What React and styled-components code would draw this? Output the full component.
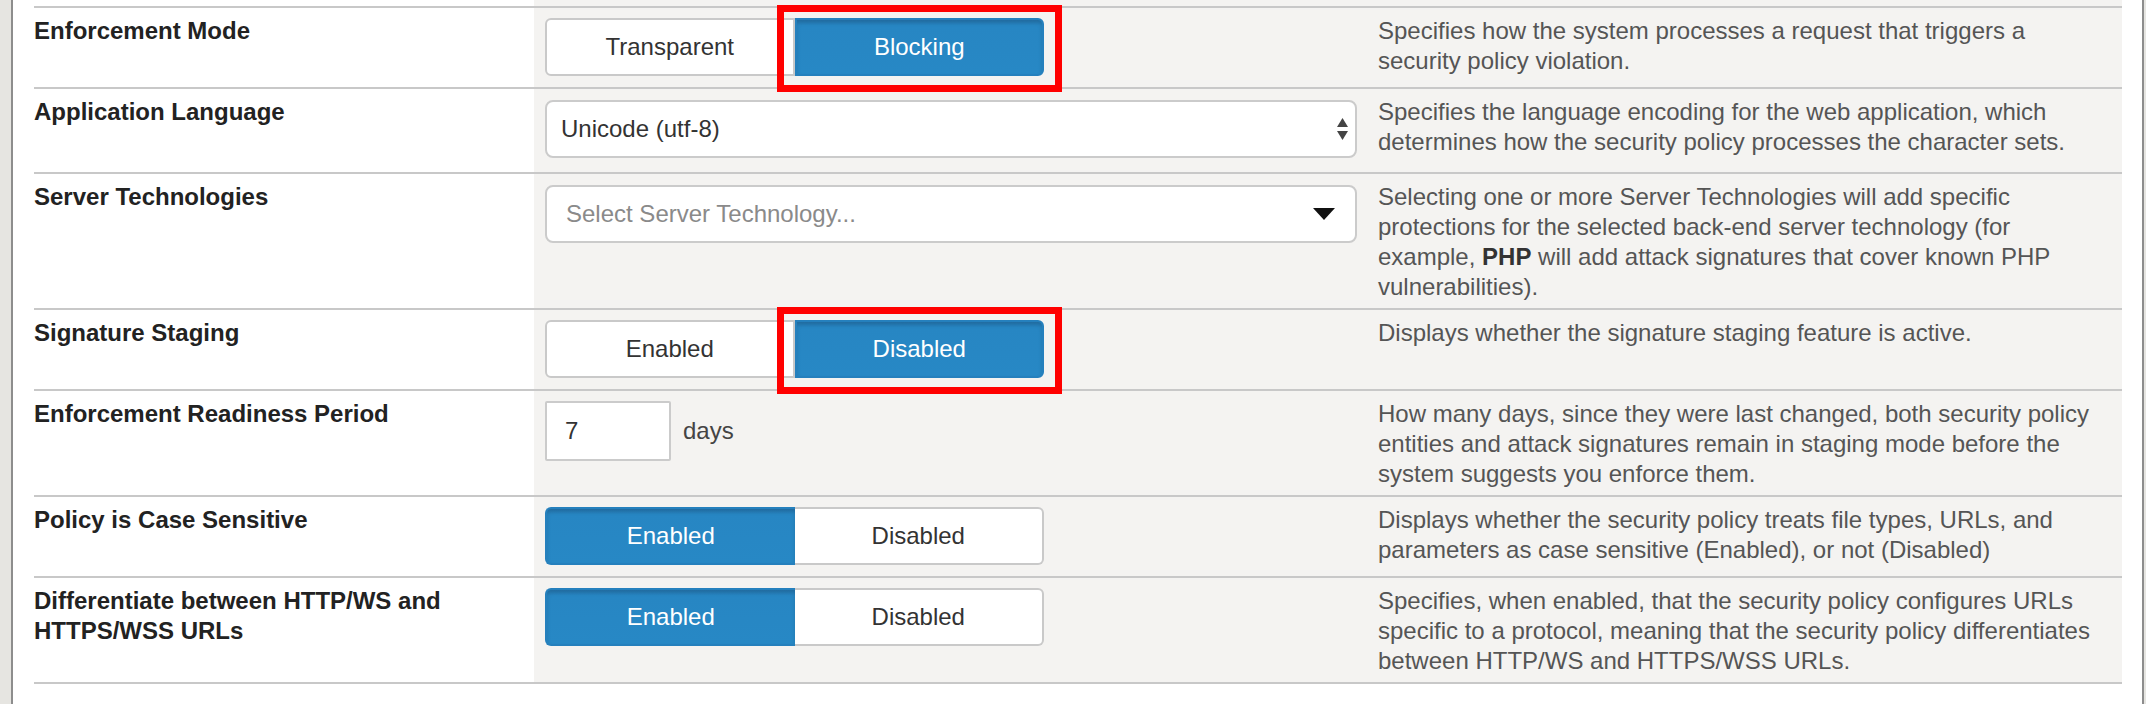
import React from "react";
import styled, { createGlobalStyle } from "styled-components";

const GlobalStyle = createGlobalStyle`
  html, body {
    margin: 0;
    padding: 0;
    background: #fff;
  }
  body {
    font-family: "Liberation Sans", Arial, Helvetica, sans-serif;
    -webkit-font-smoothing: antialiased;
  }
`;

const Page = styled.div`
  display: flex;
  width: 2146px;
  height: 704px;
  overflow: hidden;
  background: #fff;
`;

const SideStrip = styled.div`
  width: ${({ $w }) => $w}px;
  flex: none;
  background: #e6e5e1;
  ${({ $side }) =>
    $side === "left"
      ? "border-right: 2px solid #8d8d8d;"
      : "border-left: 2px solid #8d8d8d;"}
`;

const Main = styled.div`
  flex: 1;
  padding: 0 20px 0 21px;
`;

const TopStub = styled.div`
  display: grid;
  grid-template-columns: 500px 844px 1fr;
  height: 6px;
  border-bottom: 2px solid #c8c8c8;

  & > div + div {
    background: #f4f3f1;
  }
`;

const Row = styled.div`
  display: grid;
  grid-template-columns: 500px 844px 1fr;
  border-bottom: 2px solid #c8c8c8;
`;

const Label = styled.div`
  padding: 8px 20px 8px 0;
  font-size: 24px;
  line-height: 30px;
  font-weight: 700;
  color: #222;
  background: #fff;
`;

const Control = styled.div`
  display: flex;
  align-items: flex-start;
  gap: 12px;
  padding: 10px 21px 11px 11px;
  background: #f4f3f1;
`;

const Desc = styled.div`
  padding: 8px 20px 6px 0;
  font-size: 24px;
  line-height: 30px;
  color: #555;
  background: #f4f3f1;

  b {
    color: #333;
  }
`;

const ToggleGroup = styled.div`
  display: flex;
  width: 499px;
  height: 58px;
`;

const Segment = styled.div`
  position: relative;
  flex: 1;
  display: flex;
  align-items: center;
  justify-content: center;
  font-size: 24px;
  color: ${({ $active }) => ($active ? "#fff" : "#333")};
  background: ${({ $active }) =>
    $active ? "linear-gradient(#2579b4, #2786c3 10%, #2788c5)" : "#fff"};
  border: 2px solid ${({ $active }) => ($active ? "#2580bd" : "#c9c9c9")};
  box-shadow: ${({ $active }) =>
    $active ? "inset 0 3px 4px rgba(0, 0, 0, 0.12)" : "none"};

  &:first-child {
    border-radius: 6px 0 0 6px;
  }
  &:last-child {
    border-radius: 0 6px 6px 0;
    ${({ $active }) => ($active ? "" : "border-left: none;")}
  }
  &:first-child:not(:last-child) {
    ${({ $active }) => ($active ? "border-right: none;" : "")}
  }
`;

const Highlight = styled.span`
  position: absolute;
  top: -15px;
  left: -20px;
  right: -20px;
  bottom: -18px;
  border: 7px solid #ff0000;
  z-index: 2;
  pointer-events: none;
`;

const Select = styled.div`
  width: 812px;
  height: 58px;
  margin: 1px 0 3px;
  box-sizing: border-box;
  display: flex;
  align-items: center;
  justify-content: space-between;
  padding: 0 ${({ $pr }) => $pr}px 0 ${({ $pl }) => $pl}px;
  background: #fff;
  border: 2px solid #cbcbcb;
  border-radius: 8px;
  font-size: 24px;
  color: ${({ $placeholder }) => ($placeholder ? "#8a8a8a" : "#333")};
`;

const NumberInput = styled.div`
  width: 126px;
  height: 60px;
  box-sizing: border-box;
  display: flex;
  align-items: center;
  padding-left: 18px;
  background: #fff;
  border: 2px solid #cbcbcb;
  border-radius: 2px;
  font-size: 24px;
  color: #333;
`;

const Unit = styled.span`
  height: 60px;
  display: flex;
  align-items: center;
  font-size: 24px;
  color: #444;
`;

const UpDownIcon = () => (
  <svg width="11" height="22" viewBox="0 0 11 22">
    <path d="M5.5 0 L11 9 L0 9 Z" fill="#444" />
    <path d="M0 13 L11 13 L5.5 22 Z" fill="#444" />
  </svg>
);

const CaretIcon = () => (
  <svg width="22" height="12" viewBox="0 0 22 12">
    <path d="M0 0 L22 0 L11 12 Z" fill="#111" />
  </svg>
);

const Toggle = ({ options, active, highlight }) => (
  <ToggleGroup>
    {options.map((opt, i) => (
      <Segment key={opt} $active={i === active}>
        {opt}
        {highlight && i === active && <Highlight />}
      </Segment>
    ))}
  </ToggleGroup>
);

const App = () => (
  <>
    <GlobalStyle />
    <Page>
      <SideStrip $w={11} $side="left" />
      <Main>
        <TopStub>
          <div />
          <div />
          <div />
        </TopStub>

        <Row>
          <Label>Enforcement Mode</Label>
          <Control>
            <Toggle options={["Transparent", "Blocking"]} active={1} highlight />
          </Control>
          <Desc>
            Specifies how the system processes a request that triggers a security
            policy violation.
          </Desc>
        </Row>

        <Row>
          <Label>Application Language</Label>
          <Control>
            <Select $pl={14} $pr={7}>
              Unicode (utf-8)
              <UpDownIcon />
            </Select>
          </Control>
          <Desc>
            Specifies the language encoding for the web application, which
            determines how the security policy processes the character sets.
          </Desc>
        </Row>

        <Row>
          <Label>Server Technologies</Label>
          <Control>
            <Select $pl={19} $pr={20} $placeholder>
              Select Server Technology...
              <CaretIcon />
            </Select>
          </Control>
          <Desc>
            Selecting one or more Server Technologies will add specific
            protections for the selected back-end server technology (for
            example, <b>PHP</b> will add attack signatures that cover known PHP
            vulnerabilities).
          </Desc>
        </Row>

        <Row>
          <Label>Signature Staging</Label>
          <Control>
            <Toggle options={["Enabled", "Disabled"]} active={1} highlight />
          </Control>
          <Desc>Displays whether the signature staging feature is active.</Desc>
        </Row>

        <Row>
          <Label>Enforcement Readiness Period</Label>
          <Control>
            <NumberInput>7</NumberInput>
            <Unit>days</Unit>
          </Control>
          <Desc>
            How many days, since they were last changed, both security policy
            entities and attack signatures remain in staging mode before the
            system suggests you enforce them.
          </Desc>
        </Row>

        <Row>
          <Label>Policy is Case Sensitive</Label>
          <Control>
            <Toggle options={["Enabled", "Disabled"]} active={0} />
          </Control>
          <Desc>
            Displays whether the security policy treats file types, URLs, and
            parameters as case sensitive (Enabled), or not (Disabled)
          </Desc>
        </Row>

        <Row>
          <Label>Differentiate between HTTP/WS and HTTPS/WSS URLs</Label>
          <Control>
            <Toggle options={["Enabled", "Disabled"]} active={0} />
          </Control>
          <Desc>
            Specifies, when enabled, that the security policy configures URLs
            specific to a protocol, meaning that the security policy
            differentiates between HTTP/WS and HTTPS/WSS URLs.
          </Desc>
        </Row>
      </Main>
      <SideStrip $w={2} $side="right" />
    </Page>
  </>
);

export default App;
